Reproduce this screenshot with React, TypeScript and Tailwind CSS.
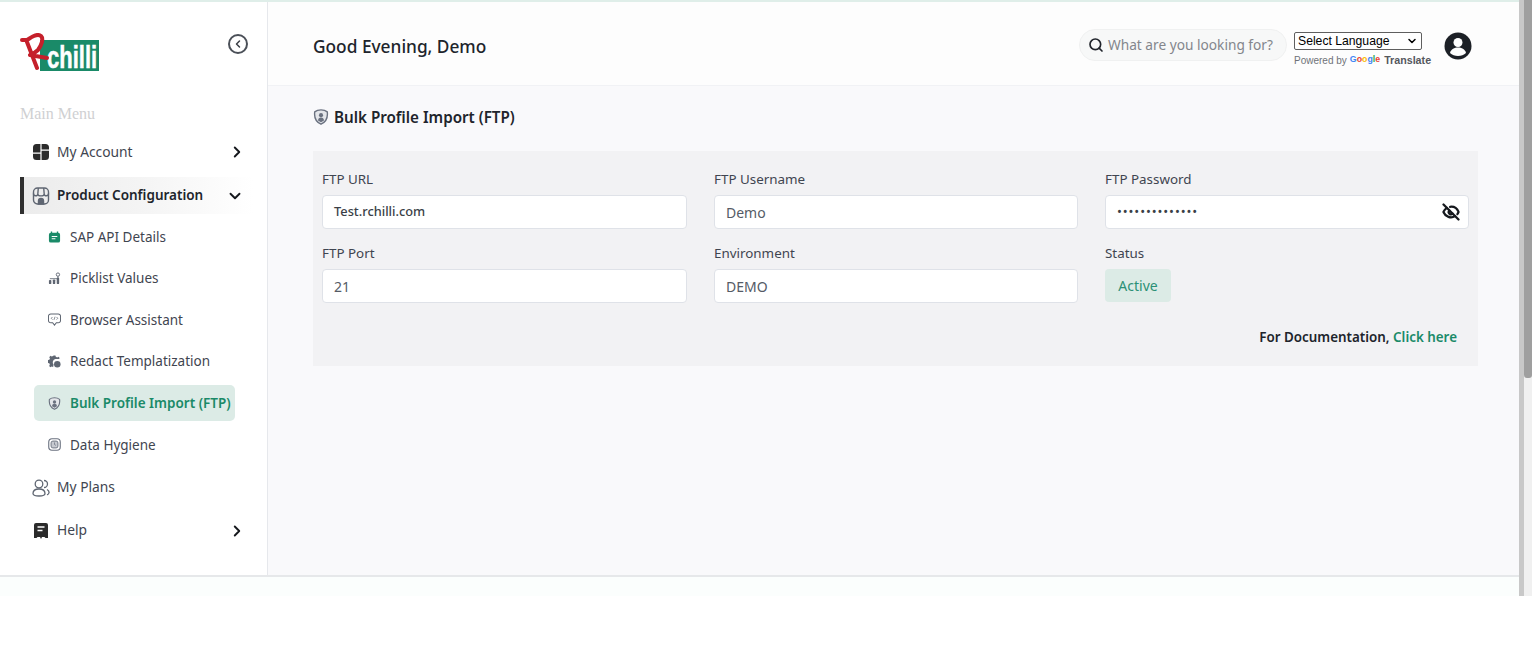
import { ChevronRight, ChevronDown, ChevronLeft, Search, EyeOff } from "lucide-react";

const font = "font-['Noto_Sans',sans-serif]";

function Logo() {
  return (
    <svg width="92" height="44" viewBox="0 0 92 44" className="block shrink-0">
      <rect x="21" y="7" width="59" height="31" fill="#1a8a68" />
      <text transform="translate(28 35) scale(1 1.400)" fontFamily="Liberation Sans" fontWeight="700" fontSize="22" fill="#fff" stroke="#fff" strokeWidth=".4">chilli</text>
      <path d="M3 7 H8 C13 4 18 0 22 3 C25 6 22 13 19 17 C16 20 13 21 11 22 L28 25 M8 9 L18 35" fill="none" stroke="#c5202b" strokeWidth="4" strokeLinecap="round" strokeLinejoin="round" />
    </svg>
  );
}

function AccountIcon() {
  return (
    <svg width="18" height="18" viewBox="0 0 18 18" fill="#2b2b2b" className="shrink-0">
      <path d="M1 9.500V4.500A3.500 3.500 0 0 1 4.500 1H8.400v8.500ZM9.600 1h3.900A3.500 3.500 0 0 1 17 4.500V6.500H9.600ZM9.600 7.700H17v5.800a3.500 3.500 0 0 1-3.500 3.500H9.600ZM1 10.700h7.400V17H4.500A3.500 3.500 0 0 1 1 13.500Z" />
    </svg>
  );
}

function StoreIcon() {
  return (
    <svg width="18" height="18" viewBox="0 0 18 18" fill="none" stroke="#5f6672" strokeWidth="1.400" className="shrink-0">
      <rect x="1.500" y="1" width="15" height="16" rx="4" />
      <path d="M6.300 1 5.800 7M11.700 1l.5 6M1.500 6.500c0 3 4.300 3 4.300.5 0 2.500 6.400 2.500 6.400 0 0 2.500 4.300 2.500 4.300-.5" />
      <path d="M6.500 17v-3a2.500 2.500 0 0 1 5 0v3Z" fill="#5f6672" />
    </svg>
  );
}

function PlansIcon() {
  return (
    <svg width="18" height="18" viewBox="0 0 18 18" fill="none" stroke="#5f6672" strokeWidth="1.300" className="shrink-0">
      <circle cx="7" cy="5" r="3.800" />
      <path d="M1 14.500c0-3 2.500-4.500 6-4.500s6 1.500 6 4.500c0 1.800-2.500 2.500-6 2.500s-6-.7-6-2.500Z" />
      <path d="M12 1.500a3.500 3.500 0 0 1 0 7M15 10.500c1.500.8 2.200 2 2 3.300-.1 1-.8 1.700-2 2.100" />
    </svg>
  );
}

function HelpIcon() {
  return (
    <svg width="18" height="18" viewBox="0 0 18 18" fill="#2b2b2b" className="shrink-0">
      <path d="M4 1h10a2 2 0 0 1 2 2v13h-2.500l-1-1H10l-1 2-1-2H5.500l-1 1H2V3a2 2 0 0 1 2-2Z" />
      <path d="M5.500 5h7M5.500 8.500h5" stroke="#fff" strokeWidth="1.400" />
    </svg>
  );
}

function SapIcon() {
  return (
    <svg width="13" height="13" viewBox="0 0 14 14" className="shrink-0">
      <path d="M3 1.500h1.500v1.500h5V1.500H11v1.500a2 2 0 0 1 2 2v6.500a2 2 0 0 1-2 2H3a2 2 0 0 1-2-2V5a2 2 0 0 1 2-2Z" fill="#1a8a68" />
      <path d="M4 7h6M4 9.500h4" stroke="#fff" strokeWidth="1.100" />
    </svg>
  );
}

function PicklistIcon() {
  return (
    <svg width="13" height="13" viewBox="0 0 14 14" fill="#5f6672" className="shrink-0">
      <rect x="1" y="8.500" width="2.600" height="4.500" rx="1" />
      <rect x="5.200" y="8" width="2.600" height="5" rx="1" />
      <rect x="9.400" y="6" width="2.600" height="7" rx="1" />
      <circle cx="10.700" cy="2.800" r="1.800" fill="none" stroke="#5f6672" strokeWidth="1" />
      <path d="M2 7.200H10.700V4.500" stroke="#5f6672" strokeWidth=".9" fill="none" />
    </svg>
  );
}

function AssistantIcon() {
  return (
    <svg width="13" height="13" viewBox="0 0 14 14" fill="none" stroke="#5f6672" strokeWidth="1.100" className="shrink-0">
      <path d="M3 1h8a2.500 2.500 0 0 1 2.500 2.500V8A2.500 2.500 0 0 1 11 10.500H9L7 13l-2-2.500H3A2.500 2.500 0 0 1 .5 8V3.500A2.500 2.500 0 0 1 3 1Z" />
      <path d="M4.800 4.300 3.500 5.700l1.300 1.400M9.200 4.300l1.300 1.400-1.300 1.400M7.600 4 6.400 7.400" strokeWidth=".8" />
    </svg>
  );
}

function RedactIcon() {
  return (
    <svg width="13" height="13" viewBox="0 0 14 14" fill="#5f6672" className="shrink-0">
      <path d="M6 .5h2l.4 1.500 1.500.6 1.300-.8 1.400 1.400-.7 1.200H8a3.500 3.500 0 0 0-2 5.800L5.500 13l-1.600-.6-1.300.8-1.400-1.400.8-1.300-.6-1.500L0 8.500v-3l1.500-.4.600-1.500-.8-1.300L2.700.9l1.300.8 1.500-.6Z" />
      <circle cx="10" cy="10" r="3.500" />
    </svg>
  );
}

function ShieldIcon({ size = 13 }: { size?: number }) {
  return (
    <svg width={size} height={size} viewBox="0 0 14 14" fill="none" className="shrink-0">
      <path d="M7 .8 C9 .8 11 1.300 12.500 2.500 C13 6.500 12 11 7 13.300 C2 11 1 6.500 1.500 2.500 C3 1.300 5 .8 7 .8Z" fill="#e4e6ea" stroke="#6b7280" strokeWidth="1.200" strokeLinejoin="round" />
      <circle cx="7" cy="5.400" r="1.800" fill="#6b7280" />
      <path d="M4.400 10c0-1.700 1.100-2.600 2.600-2.600s2.600.9 2.600 2.600L7 11.500Z" fill="#6b7280" />
    </svg>
  );
}

function HygieneIcon() {
  return (
    <svg width="13" height="13" viewBox="0 0 14 14" fill="none" stroke="#6b7280" className="shrink-0">
      <rect x=".8" y=".8" width="12.400" height="12.400" rx="3.500" strokeWidth="1.200" />
      <rect x="3.300" y="3.300" width="7.400" height="7.400" rx="2" fill="#c7cad0" strokeWidth="1" />
      <path d="M7 4.800V7l1.500 1" strokeWidth=".8" />
    </svg>
  );
}

const subItems = [
  { label: "SAP API Details", icon: <SapIcon /> },
  { label: "Picklist Values", icon: <PicklistIcon /> },
  { label: "Browser Assistant", icon: <AssistantIcon /> },
  { label: "Redact Templatization", icon: <RedactIcon /> },
  { label: "Bulk Profile Import (FTP)", icon: <ShieldIcon />, active: true },
  { label: "Data Hygiene", icon: <HygieneIcon /> },
];

function Sidebar() {
  return (
    <aside className="w-[268px] shrink-0 border-r border-[#e6e8ec] bg-white pl-5">
      <div className="flex h-[88px] items-start justify-between pr-[19px]">
        <div className="mt-[31px] -ml-[1px]"><Logo /></div>
        <div className="mt-[32px] flex h-[20px] w-[20px] items-center justify-center rounded-full border-2 border-[#4b5058]">
          <ChevronLeft size={12} strokeWidth={3} color="#3b3f46" />
        </div>
      </div>
      <div className="mt-[12px] h-[24px] font-['Liberation_Serif',serif] text-[16px] leading-[24px] text-[#cfd0d2]">Main Menu</div>
      <div className="mt-[5px] flex h-[42px] items-center pl-[12px] pr-[21px]">
        <AccountIcon />
        <span className="ml-[7px] flex-1 text-[13.800px] text-[#3f4550]">My Account</span>
        <ChevronRight size={18} strokeWidth={2.500} color="#15181d" />
      </div>
      <div className="mt-[4px] mr-[14px] flex h-[37px] items-center border-l-[4px] border-[#2f2f2f] bg-gradient-to-r from-[#ececec] via-[#f4f4f4] to-white pl-[8px] pr-[9px]">
        <StoreIcon />
        <span className="ml-[7px] flex-1 text-[13.500px] font-semibold text-[#20242b]">Product Configuration</span>
        <ChevronDown size={18} strokeWidth={2.500} color="#15181d" />
      </div>
      <div className="mt-[2px] ml-[14px] mr-[32px]">
        {subItems.map((it) => (
          <div
            key={it.label}
            className={
              it.active
                ? "my-[3px] flex h-[36px] items-center whitespace-nowrap rounded-[5px] bg-[#dcebe6] pl-[14px]"
                : "flex h-[41.500px] items-center whitespace-nowrap pl-[14px]"
            }
          >
            {it.icon}
            <span className={it.active ? "ml-[9px] text-[13.500px] font-semibold text-[#1a8a68]" : "ml-[9px] text-[13.500px] text-[#3f4550]"}>{it.label}</span>
          </div>
        ))}
      </div>
      <div className="mt-[1px] flex h-[42px] items-center pl-[12px] pr-[21px]">
        <PlansIcon />
        <span className="ml-[7px] flex-1 text-[13.800px] text-[#3f4550]">My Plans</span>
      </div>
      <div className="mt-[1px] flex h-[42px] items-center pl-[12px] pr-[21px]">
        <HelpIcon />
        <span className="ml-[7px] flex-1 text-[13.800px] text-[#3f4550]">Help</span>
        <ChevronRight size={18} strokeWidth={2.500} color="#15181d" />
      </div>
    </aside>
  );
}

function Field({ label, value, valueClass, children }: { label: string; value: string; valueClass?: string; children?: React.ReactNode }) {
  return (
    <div>
      <div className="h-[22px] text-[13.400px] leading-[22px] text-[#3f4550]">{label}</div>
      <div className="mt-[5px] flex h-[34px] items-center rounded-[4px] border border-[#dfe2e8] bg-white pl-[11px] pr-[8px]">
        <span className={valueClass ?? "flex-1 text-[14px] text-[#555b66]"}>{value}</span>
        {children}
      </div>
    </div>
  );
}

function Header() {
  return (
    <header className="flex h-[84px] shrink-0 items-start border-b border-[#f1f2f5] bg-[#fdfdfd] pl-[45px] pr-[47px]">
      <h1 className="mt-[32px] flex-1 text-[17.300px] font-medium leading-[26px] text-[#20242b]">Good Evening, Demo</h1>
      <div className="mt-[27px] flex h-[32px] w-[208px] items-center rounded-full border border-[#f0f1f1] bg-[#f7f8f8] pl-[8px]">
        <Search size={16} strokeWidth={2.500} color="#20242b" />
        <span className="ml-[4px] text-[13.700px] text-[#83868c]">What are you looking for?</span>
      </div>
      <div className="ml-[7px] mt-[30px] w-[136px]">
        <div className="flex h-[18px] w-[128px] items-center justify-between rounded-[2px] border border-[#5f5f5f] bg-white pl-[3px] pr-[3px] font-['Liberation_Sans',sans-serif] text-[12.200px] text-black">
          <span>Select Language</span>
          <ChevronDown size={12} strokeWidth={3} />
        </div>
        <div className="mt-[2px] flex h-[16px] items-center whitespace-nowrap font-['Liberation_Sans',sans-serif] text-[10px] text-[#6f7278]">
          Powered by
          <span className="ml-[3px] text-[8.800px] font-bold">
            <span className="text-[#4285f4]">G</span>
            <span className="text-[#ea4335]">o</span>
            <span className="text-[#fbbc05]">o</span>
            <span className="text-[#4285f4]">g</span>
            <span className="text-[#34a853]">l</span>
            <span className="text-[#ea4335]">e</span>
          </span>
          <span className="ml-[4px] text-[10.700px] font-bold text-[#55585e]">Translate</span>
        </div>
      </div>
      <div className="ml-[14px] mt-[30px]">
        <svg width="28" height="28" viewBox="0 0 28 28" className="block">
          <circle cx="14" cy="14" r="13.500" fill="#1c2026" />
          <circle cx="14" cy="10.500" r="4.500" fill="#fff" />
          <path d="M6 21c1-4 4.500-5.500 8-5.500s7 1.500 8 5.500c-2 2-5 3-8 3s-6-1-8-3Z" fill="#fff" />
        </svg>
      </div>
    </header>
  );
}

export default function App() {
  return (
    <div className={`relative h-[648px] w-[1532px] overflow-hidden bg-white ${font}`}>
      <div className="flex h-[596px]">
        <div className="flex h-full w-[1519px] flex-col">
          <div className="h-[2px] shrink-0 bg-[#dfeee9]" />
          <div className="flex h-[575px] shrink-0 border-b-2 border-[#e6e8ea]">
            <Sidebar />
            <main className="flex min-w-0 flex-1 flex-col bg-[#f9f9fb]">
              <Header />
              <div className="pl-[45px] pr-[41px]">
                <div className="mt-[20px] flex h-[22px] items-center">
                  <ShieldIcon size={16} />
                  <span className="ml-[5px] text-[15.200px] font-semibold text-[#20242b]">Bulk Profile Import (FTP)</span>
                </div>
                <section className="mt-[23px] h-[215px] bg-[#f2f2f4] px-[9px] pt-[17px]">
                  <div className="grid grid-cols-[365px_364px_364px] gap-x-[27px] gap-y-[13px]">
                    <Field label="FTP URL" value="Test.rchilli.com" valueClass="flex-1 text-[12.800px] font-medium text-[#3a3f47]" />
                    <Field label="FTP Username" value="Demo" />
                    <Field label="FTP Password" value="••••••••••••••" valueClass="flex-1 text-[13px] tracking-[0.9px] text-[#3a3f47]">
                      <EyeOff size={18} strokeWidth={3} color="#15181d" />
                    </Field>
                    <Field label="FTP Port" value="21" />
                    <Field label="Environment" value="DEMO" />
                    <div>
                      <div className="h-[22px] text-[13.400px] leading-[22px] text-[#3f4550]">Status</div>
                      <div className="mt-[5px] flex h-[33px] w-[66px] items-center justify-center rounded-[4px] bg-[#dcebe6] text-[14px] text-[#2b9076]">Active</div>
                    </div>
                  </div>
                  <div className="mt-[23px] pr-[12px] text-right text-[13.400px] font-semibold leading-[22px] text-[#20242b]">
                    For Documentation, <span className="text-[#1a8a68]">Click here</span>
                  </div>
                </section>
              </div>
            </main>
          </div>
          <div className="h-[19px] shrink-0 bg-[#fbfefd]" />
        </div>
        <div className="h-full w-[5px] bg-[#c8c8c8]" />
        <div className="h-full w-[8px] bg-[#f0f0f0]">
          <div className="h-[378px] w-[8px] rounded-b-[3px] bg-[#9f9f9f]" />
        </div>
      </div>
    </div>
  );
}
